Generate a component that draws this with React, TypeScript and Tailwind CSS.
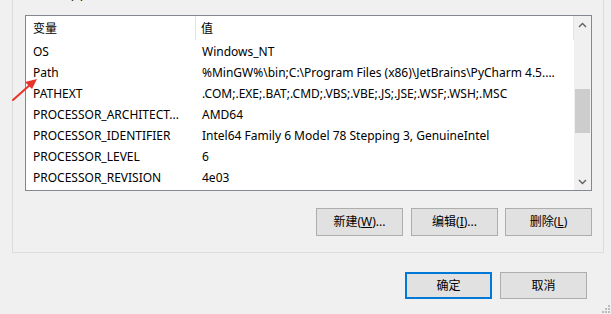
import React from 'react';

const rows: [string, string][] = [
  ['OS', 'Windows_NT'],
  ['Path', '%MinGW%\\bin;C:\\Program Files (x86)\\JetBrains\\PyCharm 4.5....'],
  ['PATHEXT', '.COM;.EXE;.BAT;.CMD;.VBS;.VBE;.JS;.JSE;.WSF;.WSH;.MSC'],
  ['PROCESSOR_ARCHITECT...', 'AMD64'],
  ['PROCESSOR_IDENTIFIER', 'Intel64 Family 6 Model 78 Stepping 3, GenuineIntel'],
  ['PROCESSOR_LEVEL', '6'],
  ['PROCESSOR_REVISION', '4e03'],
];

const font = "font-['Noto_Sans','Noto_Sans_CJK_SC',sans-serif]";

function WinButton({ children, primary, className = '' }: { children: React.ReactNode; primary?: boolean; className?: string }) {
  return (
    <div
      className={`w-[87px] flex items-center justify-center bg-[#e1e1e1] text-[12px] text-black ${
        primary ? 'border-2 border-[#0078d7]' : 'border border-[#adadad]'
      } ${className}`}
    >
      {children}
    </div>
  );
}

export default function App() {
  return (
    <div className={`relative w-[611px] h-[314px] bg-[#f0f0f0] overflow-hidden ${font}`}>
      {/* system variables group box, top cut off */}
      <div className="relative ml-[12px] w-[592px] h-[253px] border-x border-b border-[#dcdcdc] pt-[15px] pl-[12px]">
        <div className="absolute left-[8px] top-[-13px] px-[1px] text-[12px] leading-[16px] text-black bg-[#f0f0f0]">系统变量(S)</div>

        <div className="flex w-[567px] h-[176px] border border-[#828790] bg-white">
          <div className="flex-1 flex flex-col">
            <div className="flex h-[24px] items-center text-[12px] text-black">
              <div className="w-[170px] h-full flex items-center pl-[7px] pt-[1px] border-r border-[#e5e5e5]">变量</div>
              <div className="flex-1 h-full flex items-center pl-[5px] pt-[1px] border-r border-[#e5e5e5]">值</div>
            </div>
            {rows.map(([k, v]) => (
              <div key={k} className="flex h-[21px] items-center pt-[2px] text-[12px] text-black whitespace-nowrap">
                <div className="w-[170px] pl-[7px] overflow-hidden">{k}</div>
                <div className="flex-1 pl-[6px] overflow-hidden">{v}</div>
              </div>
            ))}
          </div>
          {/* scrollbar */}
          <div className="w-[17px] flex flex-col bg-[#f0f0f0]">
            <div className="h-[17px] flex items-center justify-center">
              <svg width="9" height="6" viewBox="0 0 9 6"><path d="M1 5 L4.5 1.5 L8 5" fill="none" stroke="#606060" strokeWidth="1.4" /></svg>
            </div>
            <div className="flex-1 flex flex-col px-[1px]">
              <div className="h-[56px]" />
              <div className="h-[44px] bg-[#cdcdcd]" />
            </div>
            <div className="h-[17px] flex items-center justify-center">
              <svg width="9" height="6" viewBox="0 0 9 6"><path d="M1 1 L4.5 4.5 L8 1" fill="none" stroke="#606060" strokeWidth="1.4" /></svg>
            </div>
          </div>
        </div>

        <div className="flex justify-end w-[567px] mt-[17px]">
          <WinButton className="h-[28px]">新建(<span className="underline">W</span>)...</WinButton>
          <WinButton className="h-[28px] ml-[8px]">编辑(<span className="underline">I</span>)...</WinButton>
          <WinButton className="h-[28px] ml-[7px]">删除(<span className="underline">L</span>)</WinButton>
        </div>
      </div>

      <div className="flex justify-end mt-[19px] pr-[24px]">
        <WinButton primary className="h-[27px]">确定</WinButton>
        <WinButton className="h-[27px] ml-[8px]">取消</WinButton>
      </div>

      {/* size grip */}
      <svg className="absolute right-[1px] bottom-[1px]" width="8" height="8" viewBox="0 0 8 8">
        <rect x="6" y="0" width="2" height="2" fill="#bcbcbc" />
        <rect x="3" y="3" width="2" height="2" fill="#bcbcbc" />
        <rect x="6" y="3" width="2" height="2" fill="#bcbcbc" />
        <rect x="0" y="6" width="2" height="2" fill="#bcbcbc" />
        <rect x="3" y="6" width="2" height="2" fill="#bcbcbc" />
        <rect x="6" y="6" width="2" height="2" fill="#bcbcbc" />
      </svg>

      {/* red annotation arrow */}
      <svg className="absolute left-[10px] top-[76px]" width="30" height="28" viewBox="0 0 30 28">
        <path d="M3 24 L21 8" stroke="#e8352b" strokeWidth="2" strokeLinecap="round" />
        <path d="M27 3 L15 6 L22 13 Z" fill="#e8352b" />
      </svg>
    </div>
  );
}
